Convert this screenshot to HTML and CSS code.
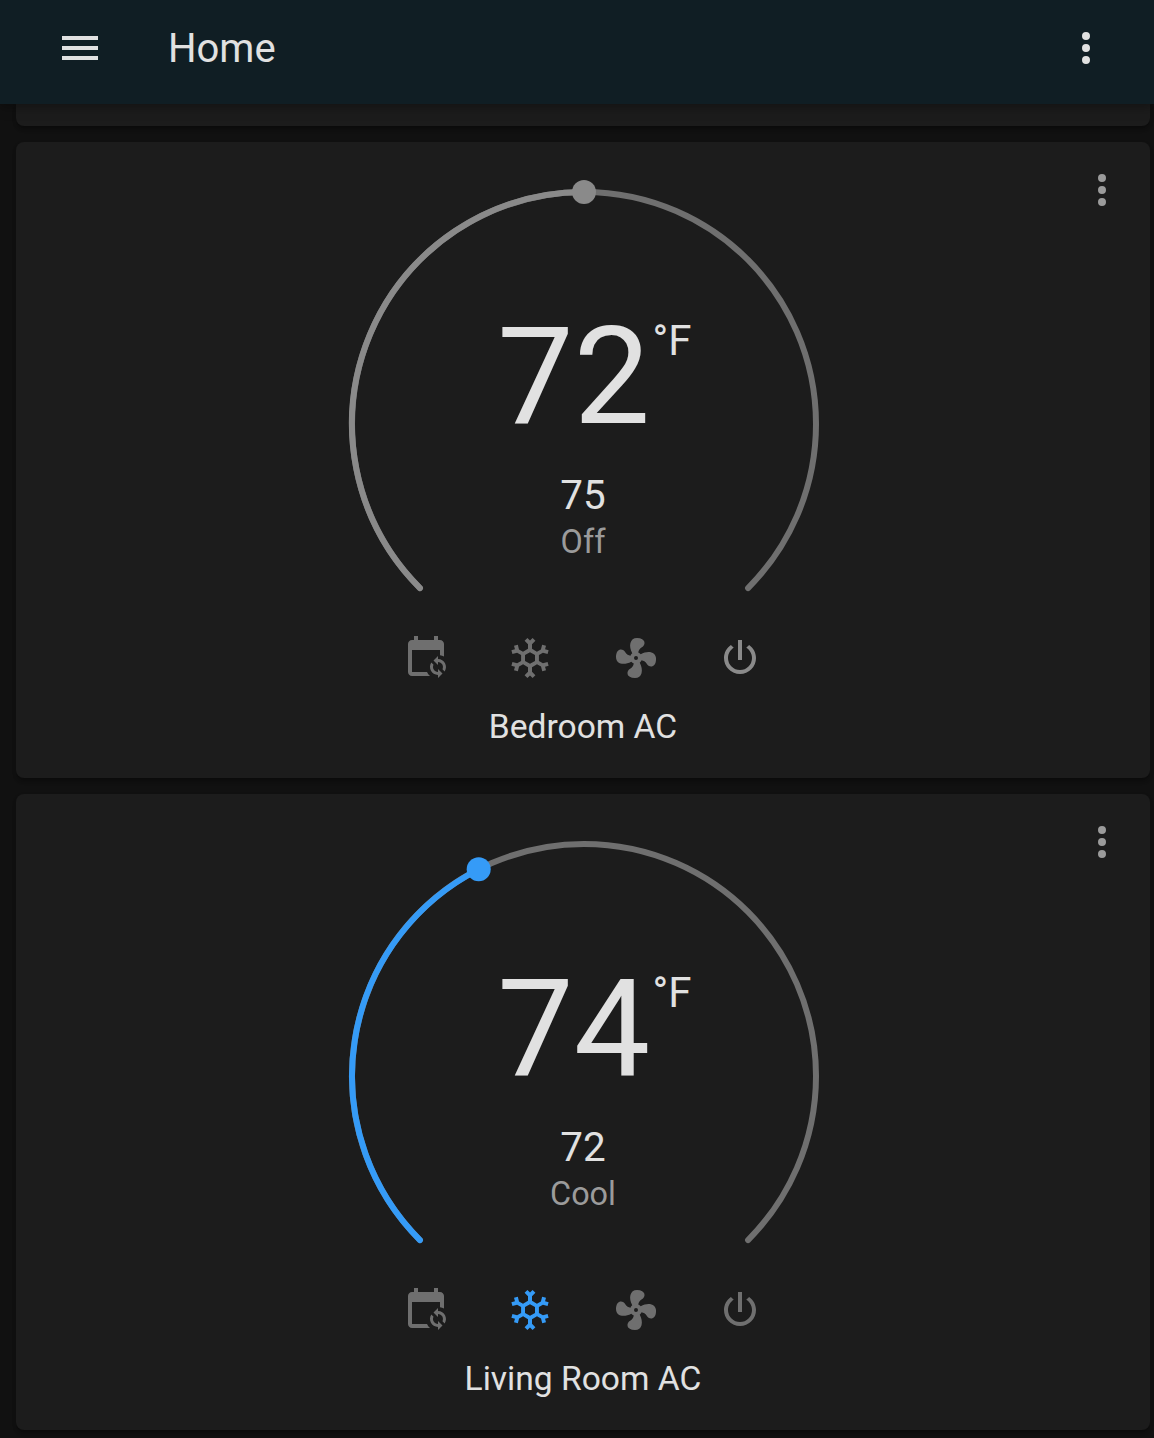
FILE: index.html
```html
<!DOCTYPE html>
<html lang="en">
<head>
<meta charset="utf-8">
<title>Home</title>
<link rel="stylesheet" href="styles.css">
</head>
<body>
<svg class="defs" aria-hidden="true">
  <symbol id="dots" viewBox="0 0 24 24"><path d="M12,16A2,2 0 0,1 14,18A2,2 0 0,1 12,20A2,2 0 0,1 10,18A2,2 0 0,1 12,16M12,10A2,2 0 0,1 14,12A2,2 0 0,1 12,14A2,2 0 0,1 10,12A2,2 0 0,1 12,10M12,4A2,2 0 0,1 14,6A2,2 0 0,1 12,8A2,2 0 0,1 10,6A2,2 0 0,1 12,4Z"/></symbol>
  <symbol id="menu" viewBox="0 0 24 24"><path d="M3,6H21V8H3V6M3,11H21V13H3V11M3,16H21V18H3V16Z"/></symbol>
  <symbol id="auto" viewBox="0 0 24 24"><path d="M18 11V12.5C21.19 12.5 23.09 16.05 21.33 18.71L20.24 17.62C21.06 15.96 19.85 14 18 14V15.5L15.75 13.25L18 11M18 22V20.5C14.81 20.5 12.91 16.95 14.67 14.29L15.76 15.38C14.94 17.04 16.15 19 18 19V17.5L20.25 19.75L18 22M19 3H18V1H16V3H8V1H6V3H5C3.89 3 3 3.9 3 5V19C3 20.1 3.89 21 5 21H14C13.36 20.45 12.86 19.77 12.5 19H5V8H19V10.59C19.71 10.7 20.39 10.94 21 11.31V5C21 3.9 20.1 3 19 3Z"/></symbol>
  <symbol id="cool" viewBox="0 0 24 24"><path d="M20.79,13.95L18.46,14.57L16.46,13.44V10.56L18.46,9.43L20.79,10.05L21.31,8.12L19.54,7.65L20,5.88L18.07,5.36L17.45,7.69L15.45,8.82L13,7.38V5.12L14.71,3.41L13.29,2L12,3.29L10.71,2L9.29,3.41L11,5.12V7.38L8.5,8.82L6.5,7.69L5.92,5.36L4,5.88L4.47,7.65L2.7,8.12L3.22,10.05L5.55,9.43L7.55,10.56V13.45L5.55,14.58L3.22,13.96L2.7,15.89L4.47,16.36L4,18.12L5.93,18.64L6.55,16.31L8.55,15.18L11,16.62V18.88L9.29,20.59L10.71,22L12,20.71L13.29,22L14.7,20.59L13,18.88V16.62L15.5,15.17L17.5,16.3L18.12,18.63L20,18.12L19.53,16.35L21.3,15.88L20.79,13.95M9.5,10.56L12,9.11L14.5,10.56V13.44L12,14.89L9.5,13.44V10.56Z"/></symbol>
  <symbol id="fan" viewBox="0 0 24 24"><path d="M12,11A1,1 0 0,0 11,12A1,1 0 0,0 12,13A1,1 0 0,0 13,12A1,1 0 0,0 12,11M12.5,2C17,2 17.11,5.57 14.75,6.75C13.76,7.24 13.32,8.29 13.13,9.22C13.61,9.42 14.03,9.73 14.35,10.13C18.05,8.13 22.03,8.92 22.03,12.5C22.03,17 18.46,17.1 17.28,14.73C16.78,13.74 15.72,13.3 14.79,13.11C14.59,13.59 14.28,14 13.88,14.34C15.87,18.03 15.08,22 11.5,22C7,22 6.91,18.42 9.27,17.24C10.25,16.75 10.69,15.71 10.89,14.79C10.4,14.59 9.97,14.27 9.65,13.87C5.96,15.85 2,15.07 2,11.5C2,7 5.56,6.89 6.74,9.26C7.24,10.25 8.29,10.68 9.22,10.87C9.41,10.39 9.73,9.97 10.14,9.65C8.15,5.96 8.94,2 12.5,2Z"/></symbol>
  <symbol id="power" viewBox="0 0 24 24"><path d="M16.56,5.44L15.11,6.89C16.84,7.94 18,9.83 18,12A6,6 0 0,1 12,18A6,6 0 0,1 6,12C6,9.83 7.16,7.94 8.88,6.88L7.44,5.44C5.36,6.88 4,9.28 4,12A8,8 0 0,0 12,20A8,8 0 0,0 20,12C20,9.28 18.64,6.88 16.56,5.44M13,3H11V13H13"/></symbol>
</svg>

<header class="toolbar">
  <svg class="icon"><use href="#menu"/></svg>
  <h1 class="toolbar-title">Home</h1>
  <svg class="icon"><use href="#dots"/></svg>
</header>

<main class="view">
  <section class="card card-previous"></section>

  <section class="card">
    <svg class="icon card-menu"><use href="#dots"/></svg>
    <svg class="dial" viewBox="0 0 480 430">
      <path class="track" d="M77.95,408.05A232,232 0 1 1 406.05,408.05"/>
      <path class="bar" d="M77.95,408.05A232,232 0 0 1 242,12"/>
      <circle class="handle" cx="242" cy="12" r="12"/>
      <text class="current" x="155.3" y="243.4">72</text>
      <text class="unit" x="310.6" y="175">°F</text>
      <text class="target" x="241" y="329.4">75</text>
      <text class="state" x="241" y="373">Off</text>
    </svg>
    <div class="modes">
      <svg class="icon"><use href="#auto"/></svg>
      <svg class="icon"><use href="#cool"/></svg>
      <svg class="icon fan"><use href="#fan"/></svg>
      <svg class="icon selected"><use href="#power"/></svg>
    </div>
    <h2 class="name">Bedroom AC</h2>
  </section>

  <section class="card cooling">
    <svg class="icon card-menu"><use href="#dots"/></svg>
    <svg class="dial" viewBox="0 0 480 430">
      <path class="track" d="M77.95,408.05A232,232 0 1 1 406.05,408.05"/>
      <path class="bar" d="M77.95,408.05A232,232 0 0 1 136.7,37.3"/>
      <circle class="handle" cx="136.7" cy="37.3" r="12"/>
      <text class="current" x="155.3" y="243.4">74</text>
      <text class="unit" x="310.6" y="175">°F</text>
      <text class="target" x="241" y="329.4">72</text>
      <text class="state" x="241" y="373">Cool</text>
    </svg>
    <div class="modes">
      <svg class="icon"><use href="#auto"/></svg>
      <svg class="icon selected"><use href="#cool"/></svg>
      <svg class="icon fan"><use href="#fan"/></svg>
      <svg class="icon"><use href="#power"/></svg>
    </div>
    <h2 class="name">Living Room AC</h2>
  </section>
</main>
</body>
</html>
```
FILE: styles.css
```css
:root {
  --text: #e1e1e1;
  --secondary: #9b9b9b;
  --disabled: #6f6f6f;
}

* { box-sizing: border-box; }

body {
  margin: 0;
  height: 1438px;
  overflow: hidden;
  background: #111;
  color: var(--text);
  font-family: Roboto, "Noto Sans", sans-serif;
}

.defs { display: none; }

.icon {
  display: block;
  flex: none;
  width: 48px;
  height: 48px;
  fill: currentColor;
}

.toolbar {
  position: relative;
  z-index: 1;
  display: flex;
  align-items: center;
  height: 104px;
  padding: 0 44px 8px 56px;
  background: #101e24;
  box-shadow: 0 2px 12px rgba(0, 0, 0, .4);
}

.toolbar-title {
  flex: 1;
  margin: 0 0 0 64px;
  padding-top: 2px;
  font-size: 40px;
  font-weight: 400;
  line-height: 48px;
}

.view {
  display: flex;
  flex-direction: column;
  gap: 16px;
  padding: 0 4px 8px 16px;
}

.card {
  --mode: #8a8a8a;
  position: relative;
  display: flex;
  flex-direction: column;
  align-items: center;
  height: 636px;
  padding-top: 38px;
  border-radius: 8px;
  background: #1c1c1c;
  box-shadow: 0 4px 4px -1px rgba(0, 0, 0, .25), 0 2px 4px rgba(0, 0, 0, .14);
}

.cooling { --mode: #359bf7; }

.card-previous {
  height: 22px;
  padding: 0;
  border-radius: 0 0 8px 8px;
}

.card-menu {
  position: absolute;
  top: 24px;
  right: 24px;
  color: var(--secondary);
}

.dial {
  display: block;
  width: 480px;
  height: 430px;
  margin-left: -2px;
  overflow: visible;
}

.track, .bar {
  fill: none;
  stroke-width: 6px;
  stroke-linecap: round;
}

.track { stroke: var(--disabled); }
.bar { stroke: var(--mode); }
.handle { fill: var(--mode); }

.dial text { fill: var(--text); }
.dial .current { font-size: 136px; }
.dial .unit { font-size: 42px; }
.dial .target { font-size: 40.4px; text-anchor: middle; }
.dial .state { font-size: 32.4px; text-anchor: middle; fill: var(--secondary); }

.modes {
  display: flex;
  gap: 56px;
  margin-top: 24px;
  color: var(--disabled);
}

.modes .fan { margin-left: 2px; }
.modes .selected { color: var(--mode); }

.name {
  margin: 25px 0 0;
  font-size: 33.6px;
  font-weight: 400;
  line-height: 40px;
}
```
